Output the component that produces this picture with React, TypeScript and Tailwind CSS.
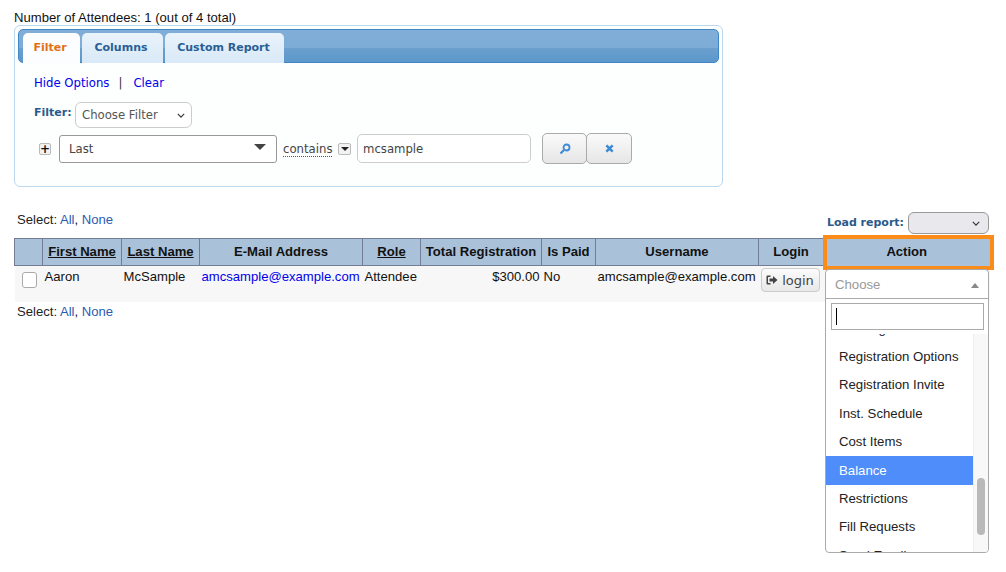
import React from "react";

const uiFont = "font-['DejaVu_Sans',sans-serif]";

const actionItems = [
  "Meeting",
  "Registration Options",
  "Registration Invite",
  "Inst. Schedule",
  "Cost Items",
  "Balance",
  "Restrictions",
  "Fill Requests",
  "Send Email",
];

function Chevron({ className }: { className?: string }) {
  return (
    <svg viewBox="0 0 10 6" className={className} fill="none" stroke="#333" strokeWidth="1.4">
      <path d="M1 1l4 4 4-4" />
    </svg>
  );
}

function SelectLinks() {
  return (
    <div className="text-[13.1px] leading-[16px] text-[#222]">
      Select: <a className="text-[#2b5cb3]">All</a>, <a className="text-[#2b5cb3]">None</a>
    </div>
  );
}

function FilterPanel() {
  return (
    <div className="ml-[14px] h-[162px] w-[709px] rounded-[6px] border border-[#bcd8ef] bg-[#fdfefe] p-[3px]">
      {/* tab bar */}
      <div className="flex h-[34px] items-end gap-[2px] rounded-[5px] border border-[#3f87c7] bg-[linear-gradient(180deg,#80aed7_0%,#7dacd6_55%,#6a9fcf_58%,#5c98ca_100%)] pl-[4px]">
        <div className={`${uiFont} -mb-px flex h-[30px] w-[57px] items-center justify-center rounded-t-[5px] bg-[#fbfdfe] pr-[3px] pt-[1px] text-[11px] font-bold text-[#e0701a]`}>
          Filter
        </div>
        <div className={`${uiFont} -mb-px flex h-[30px] w-[81px] items-center justify-center rounded-t-[5px] bg-[linear-gradient(180deg,#e9f3fb,#d9e9f7)] pr-[3px] pt-[1px] text-[11px] font-bold text-[#2a5f95]`}>
          Columns
        </div>
        <div className={`${uiFont} -mb-px flex h-[30px] w-[119px] items-center justify-center rounded-t-[5px] bg-[linear-gradient(180deg,#e9f3fb,#d9e9f7)] pr-[2px] pt-[1px] text-[11px] font-bold text-[#2a5f95]`}>
          Custom Report
        </div>
      </div>

      <div className={`${uiFont} text-[11.7px]`}>
        <div className="ml-[16px] mt-[13px] flex h-[16px] items-center text-[#0000ee]">
          <a>Hide Options</a>
          <span className="ml-[9px] text-[#333]">|</span>
          <a className="ml-[11px]">Clear</a>
        </div>

        <div className="ml-[16px] mt-[10px] flex items-start">
          <span className="mt-[3px] w-[36px] whitespace-nowrap text-[11px] font-bold text-[#2a5a8c]">Filter:</span>
          <div className="ml-[5px] flex h-[26px] w-[117px] items-center justify-between rounded-[6px] border border-[#ccc] bg-white pl-[6px] pr-[6px] pt-[1px] text-[#555]">
            <span>Choose Filter</span>
            <Chevron className="h-[5px] w-[8px]" />
          </div>
        </div>

        <div className="ml-[21px] mt-[5px] flex items-center">
          <div className="flex h-[12px] w-[12px] items-center justify-center rounded-[2px] border border-[#bbb] bg-[#f2f2f2] text-[12px] font-bold leading-none text-[#111]">
            +
          </div>
          <div className="ml-[8px] flex h-[28px] w-[218px] items-center justify-between rounded-[3px] border border-[#999] bg-white pl-[9px] pr-[10px] text-[#444]">
            <span className="mt-[2px]">Last</span>
            <span className="mb-[3px] h-0 w-0 border-x-[6px] border-t-[6px] border-x-transparent border-t-[#444]" />
          </div>
          <span className="ml-[6px] mt-[1px] w-[49px] whitespace-nowrap border-b border-dotted border-[#555] leading-[14px] text-[#444]">contains</span>
          <div className="ml-[6px] flex h-[12px] w-[13px] items-center justify-center rounded-[2px] border border-[#bbb] bg-[#f2f2f2]">
            <span className="h-0 w-0 border-x-[4px] border-t-[4px] border-x-transparent border-t-[#222]" />
          </div>
          <div className="ml-[6px] flex h-[29px] w-[174px] items-center rounded-[5px] border border-[#ccc] bg-white pl-[5px] pt-[2px] text-[#444]">
            mcsample
          </div>
          <button className="ml-[11px] flex h-[31px] w-[45px] items-center justify-center rounded-[5px] border border-[#aaa] bg-[linear-gradient(180deg,#fafafa,#e6e6e6)]">
            <svg viewBox="0 0 12 12" className="h-[12px] w-[12px]" fill="none" stroke="#3d8ad6" strokeWidth="1.8">
              <circle cx="7.5" cy="4.5" r="3" />
              <path d="M5 7L1.5 10.5" strokeWidth="2.2" />
            </svg>
          </button>
          <button className="-ml-px flex h-[31px] w-[46px] items-center justify-center rounded-[5px] border border-[#aaa] bg-[linear-gradient(180deg,#fafafa,#e6e6e6)]">
            <svg viewBox="0 0 10 10" className="h-[9px] w-[9px]" fill="none" stroke="#3d8ad6" strokeWidth="2.8">
              <path d="M1.5 1.5l7 7M8.5 1.5l-7 7" />
            </svg>
          </button>
        </div>
      </div>
    </div>
  );
}

function ActionDropdown() {
  return (
    <div className="absolute left-[825px] top-[269px] flex h-[284px] w-[164px] flex-col overflow-hidden rounded-[4px] border border-[#aaa] bg-white text-[13.2px]">
      <div className="flex h-[29px] shrink-0 items-center justify-between border-b border-[#aaa] pl-[9px] pr-[9px] pt-[2px] text-[#999]">
        <span>Choose</span>
        <span className="h-0 w-0 border-x-[4px] border-b-[5px] border-x-transparent border-b-[#888]" />
      </div>
      <div className="flex h-[35px] shrink-0 items-center pl-[5px] pr-[4px]">
        <div className="flex h-[27px] w-full items-center border border-[#aaa] pl-[4px]">
          <span className="h-[17px] w-px bg-black" />
        </div>
      </div>
      <div className="flex min-h-0 flex-1">
        <div className="min-w-0 flex-1 overflow-hidden">
          <div className="-mt-[19.6px]">
            {actionItems.map((item) => (
              <div
                key={item}
                className={
                  item === "Balance"
                    ? "flex h-[28.4px] items-center bg-[#4f8dfb] pl-[13px] text-white"
                    : "flex h-[28.4px] items-center pl-[13px] text-[#222]"
                }
              >
                {item}
              </div>
            ))}
          </div>
        </div>
        <div className="relative w-[15px] shrink-0 border-l border-[#eee] bg-[#f8f8f8]">
          <div className="absolute left-[3px] top-[144px] h-[57px] w-[8px] rounded-[4px] bg-[#b9b9b9]" />
        </div>
      </div>
    </div>
  );
}

export default function App() {
  const thBase = "border border-[#727c94] text-center font-bold text-[#111]";
  return (
    <div className="relative h-[572px] w-[1006px] overflow-hidden bg-white font-['Liberation_Sans',sans-serif]">
      <div className="ml-[14px] pt-[10px] text-[13.1px] leading-[15px] text-[#111]">
        Number of Attendees: 1 (out of 4 total)
      </div>
      <FilterPanel />

      <div className="mt-[25px] flex h-[26px] items-start justify-between pl-[17px] pr-[17px]">
        <SelectLinks />
        <div className="flex items-center">
          <span className={`${uiFont} text-[11px] font-bold text-[#2a5a8c]`}>Load report:</span>
          <div className="ml-[4px] flex h-[22px] w-[81px] items-center justify-end rounded-[6px] border border-[#999] bg-[#e8e8ed] pr-[8px]">
            <Chevron className="h-[5px] w-[8px]" />
          </div>
        </div>
      </div>

      <table className="ml-[14px] w-[975px] table-fixed border-collapse text-[13.1px]">
        <colgroup>
          <col className="w-[28px]" />
          <col className="w-[79px]" />
          <col className="w-[78px]" />
          <col className="w-[163px]" />
          <col className="w-[58px]" />
          <col className="w-[121px]" />
          <col className="w-[54px]" />
          <col className="w-[163px]" />
          <col className="w-[65px]" />
          <col className="w-[166px]" />
        </colgroup>
        <thead>
          <tr className="h-[27px] bg-[#a9c1d9]">
            <th className={thBase} />
            <th className={`${thBase} underline`}>First Name</th>
            <th className={`${thBase} underline`}>Last Name</th>
            <th className={thBase}>E-Mail Address</th>
            <th className={`${thBase} underline`}>Role</th>
            <th className={thBase}>Total Registration</th>
            <th className={thBase}>Is Paid</th>
            <th className={thBase}>Username</th>
            <th className={thBase}>Login</th>
            <th className={`${thBase} relative border-none`}>
              Action
              <div className="absolute -bottom-[4px] -left-[1px] -right-[4px] -top-[4px] border-4 border-[#fb8c1a]" />
            </th>
          </tr>
        </thead>
        <tbody>
          <tr className="h-[36px] bg-[#f7f7f7] align-top leading-[15px] text-[#111]">
            <td className="pl-[7px] pt-[6px]">
              <div className="h-[16px] w-[15px] rounded-[3px] border border-[#aaa] bg-white" />
            </td>
            <td className="pl-[2px] pt-[3px]">Aaron</td>
            <td className="pl-[2px] pt-[3px]">McSample</td>
            <td className="pl-[2px] pt-[3px] whitespace-nowrap text-[#0000ee]">amcsample@example.com</td>
            <td className="pl-[2px] pt-[3px]">Attendee</td>
            <td className="pr-[2px] pt-[3px] text-right">$300.00</td>
            <td className="pl-[2px] pt-[3px]">No</td>
            <td className="pl-[2px] pt-[3px] whitespace-nowrap">amcsample@example.com</td>
            <td className="pl-[2px] pt-[2px]">
              <button className={`${uiFont} flex h-[24px] w-[59px] items-center justify-center gap-[4px] rounded-[4px] border border-[#ccc] bg-[linear-gradient(180deg,#fcfcfc,#e8e8e8)] text-[13px] text-[#444]`}>
                <svg viewBox="0 0 12 10" className="h-[10px] w-[12px]" fill="#444">
                  <path d="M4.5 0.5H1.5A1 1 0 0 0 .5 1.5v7a1 1 0 0 0 1 1h3V8H2V2h2.5z" />
                  <path d="M3.5 3.5H7V1l4.5 4L7 9V6.5H3.5z" />
                </svg>
                login
              </button>
            </td>
            <td />
          </tr>
        </tbody>
      </table>

      <div className="ml-[17px] mt-[2px]">
        <SelectLinks />
      </div>

      <ActionDropdown />
    </div>
  );
}
